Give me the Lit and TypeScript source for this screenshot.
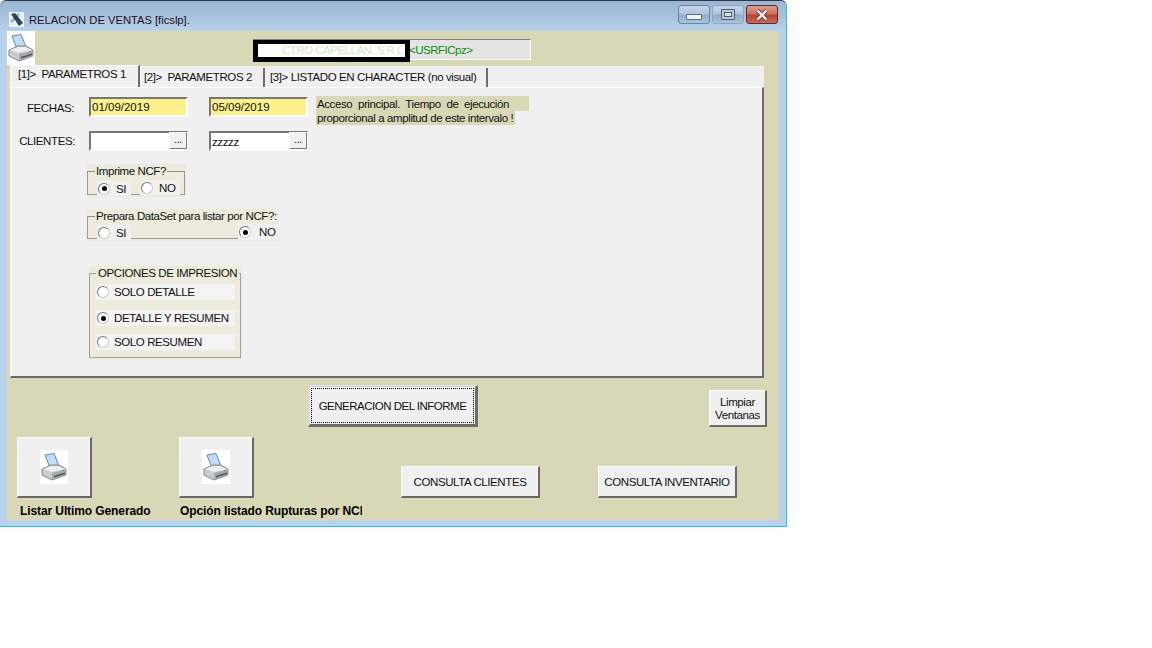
import { LitElement, html, css, svg } from "lit";
import { customElement } from "lit/decorators.js";

const printer = svg`
  <path d="M5 5 L14 3.5 L19 16 L10 18 Z" fill="#c2dcf7" stroke="#6685ad" stroke-width="1"/>
  <path d="M2 19 L11 15 L19 15 L26 19 L26 25 L12 30 L2 25 Z" fill="#c9cdcf" stroke="#7f8588" stroke-width="1"/>
  <path d="M3 19 L12 22 L25 19 L18 16 L11 16 Z" fill="#eef0f1"/>
  <path d="M12 23 L12 30 L26 25 L26 19.5 Z" fill="#a3a9ac"/>
  <path d="M14 26 L25 22.5 L25 24 L14 27.5 Z" fill="#4a4f52"/>
  <rect x="22" y="20" width="2" height="1" fill="#53b04a"/>
`;

@customElement("app-root")
export class AppRoot extends LitElement {
  static styles = css`
    :host { display: block; width: 1152px; height: 648px; background: #fff; font: 11.5px "Liberation Sans", Arial, sans-serif; letter-spacing: -.4px; color: #111; }
    .win { box-sizing: border-box; width: 787px; height: 527px; display: flex; flex-direction: column; padding: 0 7px 6px 7px;
      border: 1px solid #2f3a45; border-right-color: #1ec6e4; border-bottom-color: #1ec6e4; border-left: 0; border-radius: 6px 6px 0 0;
      background: linear-gradient(#9ab6d2 0, #a9c3dd 16px, #bad3ec 31px, #bad3ec 100%); }
    .title { flex: none; height: 30px; display: flex; align-items: center; gap: 5px; margin-left: 2px; padding-right: 1px; }
    .appicon { width: 15px; height: 15px; margin-top: 7px; margin-right: 0; }
    .title span { flex: 1; margin-top: 8px; font-size: 11.2px; letter-spacing: 0; color: #1a1030; }
    .ctl { display: flex; gap: 2px; margin-top: -3px; }
    .tb { box-sizing: border-box; width: 32px; height: 19px; display: flex; align-items: center; justify-content: center; border: 1px solid #6d84a1; border-radius: 3px;
      background: linear-gradient(#c3d6ea 0, #aac3de 48%, #8fabc9 52%, #a9c3de 100%); }
    .tb.max { border-color: #8ea6c2; }
    .tb.close { border-color: #5b2a2a; background: linear-gradient(#dd9b92 0, #cf6f5f 48%, #b8412c 52%, #c76a58 100%); }
    .tb i { display: block; box-sizing: border-box; }
    .tb.min i { width: 16px; height: 6px; margin-top: 4px; background: #eef2f6; border: 1px solid #5f6f80; border-radius: 1px; }
    .tb.max i { width: 14px; height: 11px; background: #dfe6ee; border: 1px solid #4f5d6e; box-shadow: inset 0 0 0 2px #b8c8da, inset 0 0 0 3px #4f5d6e; border-radius: 1px; }

    .client { flex: 1; min-height: 0; background: #d8d8b6; display: flex; flex-direction: column; overflow: hidden; }
    .head { flex: none; height: 35px; display: flex; }
    .logo { width: 28px; height: 34px; background: #fff; flex: none; }
    .logo svg, .big svg { display: block; width: 28px; height: 34px; }
    .status { box-sizing: border-box; position: relative; margin: 8px 0 0 218px; width: 278px; height: 21px; background: #e4e4e4; border: 1px solid #fff; border-top-color: #7d7d7d; border-left-color: #7d7d7d; color: #0a8a0a; line-height: 20px; padding-left: 155px; letter-spacing: -.5px; }
    .mask { position: absolute; left: -1px; top: 0; width: 157px; height: 22px; box-sizing: border-box; background: #fff; border: 5px solid #000; border-top-width: 4px; color: #cfe6cf; line-height: 12px; padding-left: 24px; white-space: nowrap; overflow: hidden; }

    .tabs { flex: none; display: flex; height: 21px; margin-left: 3px; width: 754px; background: #f0f0f0; align-items: flex-end; }
    .tab { box-sizing: border-box; height: 19px; line-height: 19px; padding: 0 3px 0 4px; border-right: 2px solid #6d6d6d; background: #f0f0f0; white-space: pre; }
    .tab.on { height: 22px; margin-top: -2px; border-left: 1px solid #fff; border-top: 1px solid #fff; padding: 0 0 3px 7px; line-height: 16px; width: 130px; }
    .tab.t2 { width: 125px; }
    .tab.t3 { width: 223px; padding-left: 5px; }

    .page { box-sizing: border-box; flex: none; margin-left: 3px; width: 754px; height: 291px; background: #f0f0f0; border: 2px solid #6b6b6b; border-top: 1px solid #fff; border-left: 1px solid #fff; padding: 8px 0 0 0; }
    .row { display: grid; grid-template-columns: 64px 99px 21px 99px 8px 213px; padding-left: 14px; align-items: start; }
    .row.r2 { margin-top: 6px; }
    .lab { grid-column: 1; text-align: right; padding-right: 15px; line-height: 24px; margin-left: -14px; white-space: nowrap; }
    .r2 .lab { line-height: 20px; padding-right: 14px; }
    .in { box-sizing: border-box; height: 20px; border: 2px solid #777; border-right-color: #fff; border-bottom-color: #fff; line-height: 17px; padding-left: 1px; background: #fff; display: flex; justify-content: space-between; }
    .in.y { background: #fbf08a; margin-top: 1px; letter-spacing: 0; }
    .in span { line-height: 19px; }
    .dots { width: 18px; height: 17px; margin: -1px -1px 0 0; background: #f0f0f0; border: 1px solid #fff; border-right-color: #777; border-bottom-color: #777; box-sizing: border-box; text-align: center; line-height: 13px; font-size: 11px; }
    .note { grid-column: 6; }
    .note p { margin: 0; box-sizing: border-box; background: #d8d8b6; line-height: 14px; padding-left: 1px; }
    .note .a { height: 15px; padding-top: 1px; word-spacing: 2.8px; }
    .note .b { height: 14px; width: 199px; }

    .gwrap { display: block; width: max-content; background: #ecebdc; }
    .g1 { margin: 13px 0 0 76px; width: 99px; height: 33px; }
    .g2 { margin: 12px 0 0 76px; width: 191px; height: 32px; }
    fieldset { box-sizing: border-box; margin: 0; padding: 0; border: 1px solid #9a9a9a; border-top-color: #8f8f8f; min-width: 0; height: 100%; }
    .g1 fieldset { height: 31px; width: 98px; }
    .g2 fieldset { height: 30px; }
    legend { padding: 0 1px; margin-left: 7px; line-height: 15px; white-space: nowrap; }
    .rads { display: flex; justify-content: space-between; padding: 2px 4px 0 9px; }
    .g2 .rads { padding: 2px 0 0 9px; margin-right: -1px; }
    .rad { display: flex; align-items: center; box-sizing: border-box; background: #f0f0f0; height: 15px; gap: 6px; padding-left: 1px; }
    .g1 .si { width: 34px; }
    .g1 .no { width: 40px; margin-top: -1px; gap: 6px; }
    .g2 .si { width: 34px; margin-top: -1px; }
    .g2 .no { width: 40px; margin-top: -2px; height: 16px; gap: 8px; }
    .dot { flex: none; box-sizing: border-box; width: 12px; height: 12px; border-radius: 50%; border: 1px solid #777; border-right-color: #ccc; border-bottom-color: #ccc; background: #fff; display: flex; align-items: center; justify-content: center; }
    .dot.on::after { content: ""; width: 5px; height: 5px; border-radius: 50%; background: #000; }

    .opts { box-sizing: border-box; margin: 25px 0 0 78px; width: 153px; height: 94px; background: #ecebdc; }
    .opts fieldset { height: 92px; width: 152px; margin-top: 1px; border-color: #a2a2a2; padding: 0 0 0 6px; }
    .opts legend { margin: -1px 0 0 0; padding: 0 2px; }
    .optlist { display: flex; flex-direction: column; padding-top: 3px; }
    .opt { display: flex; align-items: center; gap: 5px; width: 139px; height: 16px; background: #f3f3f3; padding-left: 1px; box-sizing: border-box; white-space: nowrap; margin-bottom: 8px; }
    .opt.mid { margin-top: 2px; }

    .btn { box-sizing: border-box; background: #f0f0f0; border: 1px solid #fff; border-right: 2px solid #696969; border-bottom: 2px solid #696969; display: flex; align-items: center; justify-content: center; text-align: center; white-space: nowrap; color: #111; }
    .actions { flex: none; display: grid; grid-template-columns: 301px 170px 231px 58px; height: 59px; align-items: start; }
    .main { grid-column: 2; width: 170px; height: 42px; margin-top: 7px; border: 2px solid #6b6b6b; border-top-color: #dcdcdc; border-left-color: #dcdcdc; border-right-width: 3px; border-bottom-width: 3px; padding: 0; letter-spacing: -.5px; }
    .main span { display: flex; align-items: center; justify-content: center; width: 100%; height: 100%; outline: 1px dotted #000; outline-offset: -2px; }
    .clean { grid-column: 4; height: 37px; margin-top: 12px; padding-top: 2px; line-height: 13px; }
    .low { flex: none; display: grid; grid-template-columns: 162px 222px 197px 139px; padding-left: 10px; }
    .stack { display: flex; flex-direction: column; }
    .big { width: 75px; height: 61px; }
    .big i { display: block; width: 28px; height: 34px; background: #fff; }
    .cap { font-weight: 700; font-size: 12px; line-height: 14px; margin: 6px 0 0 3px; white-space: nowrap; width: 182px; overflow: hidden; letter-spacing: -.1px; color: #000; }
    .stack + .stack .cap { margin-left: 1px; }
    .wide { width: 139px; height: 32px; margin-top: 29px; }
  `;

  private radio(on: boolean, text: string, cls: string) {
    return html`<div class="rad ${cls}"><span class="dot ${on ? "on" : ""}"></span>${text}</div>`;
  }

  private opt(on: boolean, text: string, cls = "") {
    return html`<div class="opt ${cls}"><span class="dot ${on ? "on" : ""}"></span>${text}</div>`;
  }

  render() {
    return html`
      <div class="win">
        <div class="title">
          <svg class="appicon" viewBox="0 0 15 15">
            <rect width="15" height="15" fill="#eaf2fb"/>
            <path d="M1 9 L9 1 L11 3 L3 11 Z" fill="#3b7fd0" opacity=".55"/>
            <path d="M2 2 L6 1 L14 11 L10 14 Z" fill="#14233d" opacity=".85"/>
          </svg>
          <span>RELACION DE VENTAS [ficslp].</span>
          <div class="ctl">
            <div class="tb min"><i></i></div>
            <div class="tb max"><i></i></div>
            <div class="tb close">
              <svg width="16" height="12" viewBox="0 0 16 12"><path d="M3.5 1.5 L12.5 10.5 M12.5 1.5 L3.5 10.5" stroke="#5a3a3a" stroke-width="4"/><path d="M3.5 1.5 L12.5 10.5 M12.5 1.5 L3.5 10.5" stroke="#f4f0ee" stroke-width="2.4"/></svg>
            </div>
          </div>
        </div>
        <div class="client">
          <div class="head">
            <div class="logo"><svg viewBox="0 0 28 34">${printer}</svg></div>
            <div class="status"><div class="mask">CTRO CAPELLAN, S R L</div>&lt;USRFICpz&gt;</div>
          </div>
          <div class="tabs">
            <div class="tab on">[1]&gt;  PARAMETROS 1</div>
            <div class="tab t2">[2]&gt;  PARAMETROS 2</div>
            <div class="tab t3">[3]&gt; LISTADO EN CHARACTER (no visual)</div>
          </div>
          <div class="page">
            <div class="row">
              <div class="lab">FECHAS:</div>
              <div class="in y">01/09/2019</div>
              <div></div>
              <div class="in y">05/09/2019</div>
              <div></div>
              <div class="note"><p class="a">Acceso principal.  Tiempo de ejecución</p><p class="b">proporcional a amplitud de este intervalo !</p></div>
            </div>
            <div class="row r2">
              <div class="lab">CLIENTES:</div>
              <div class="in"><span></span><div class="dots">...</div></div>
              <div></div>
              <div class="in"><span>zzzzz</span><div class="dots">...</div></div>
            </div>
            <div class="gwrap g1"><fieldset><legend>Imprime NCF?</legend>
              <div class="rads">${this.radio(true, "SI", "si")}${this.radio(false, "NO", "no")}</div>
            </fieldset></div>
            <div class="gwrap g2"><fieldset><legend>Prepara DataSet para listar por NCF?:</legend>
              <div class="rads">${this.radio(false, "SI", "si")}${this.radio(true, "NO", "no")}</div>
            </fieldset></div>
            <div class="opts"><fieldset><legend>OPCIONES DE IMPRESION</legend>
              <div class="optlist">
                ${this.opt(false, "SOLO DETALLE")}
                ${this.opt(true, "DETALLE Y RESUMEN", "mid")}
                ${this.opt(false, "SOLO RESUMEN")}
              </div>
            </fieldset></div>
          </div>
          <div class="actions">
            <div class="btn main"><span>GENERACION DEL INFORME</span></div>
            <div class="btn clean">Limpiar<br>Ventanas</div>
          </div>
          <div class="low">
            <div class="stack">
              <div class="btn big"><i><svg viewBox="0 0 28 34">${printer}</svg></i></div>
              <div class="cap">Listar Ultimo Generado</div>
            </div>
            <div class="stack">
              <div class="btn big"><i><svg viewBox="0 0 28 34">${printer}</svg></i></div>
              <div class="cap">Opción listado Rupturas por NCF</div>
            </div>
            <div class="btn wide">CONSULTA CLIENTES</div>
            <div class="btn wide">CONSULTA INVENTARIO</div>
          </div>
        </div>
      </div>
    `;
  }
}
